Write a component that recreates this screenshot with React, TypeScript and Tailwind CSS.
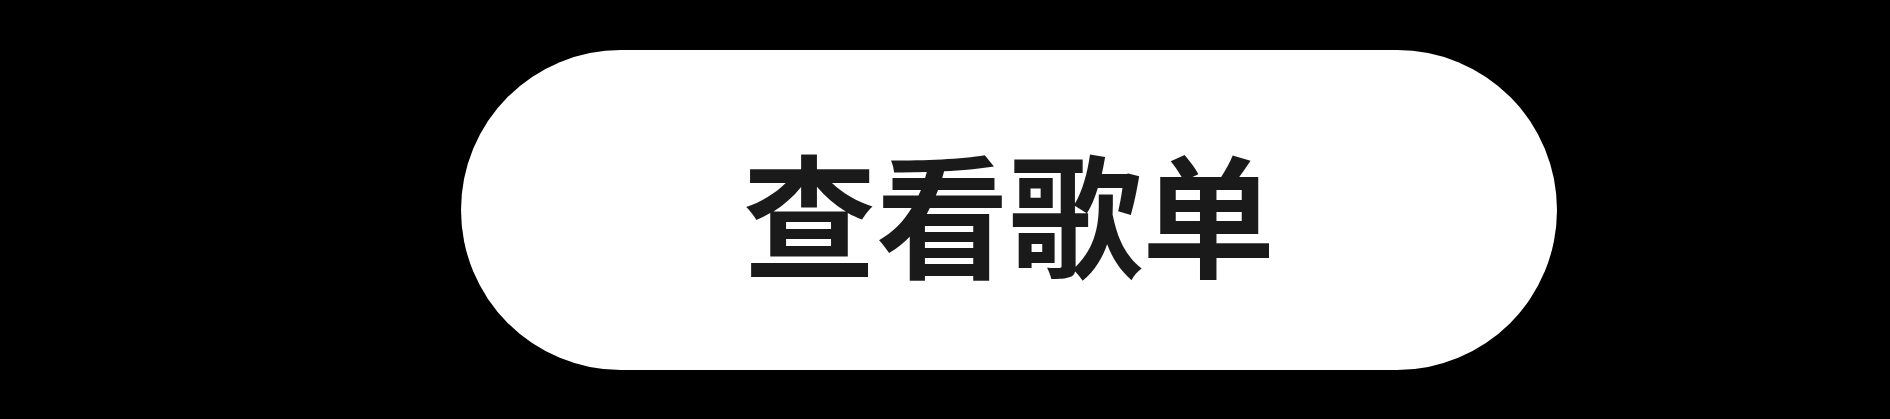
export default function App() {
  return (
    <main className="h-[419px] w-full bg-black pl-[461px] pt-[50px]">
      <button
        type="button"
        className="flex h-[320px] w-[1096px] items-center justify-center rounded-full bg-white text-[133px] font-bold leading-none text-[#1a1a1a]"
        style={{ fontFamily: '"Noto Sans CJK SC", "Noto Sans", sans-serif' }}
      >
        查看歌单
      </button>
    </main>
  );
}
